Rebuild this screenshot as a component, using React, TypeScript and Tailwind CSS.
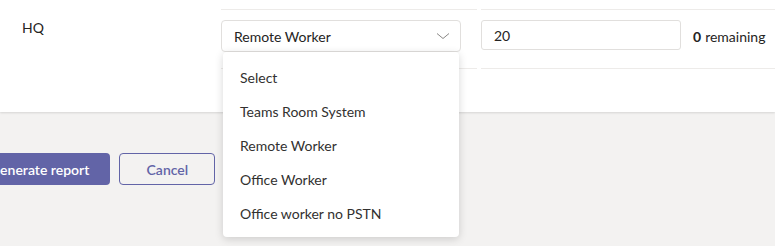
import React from "react";

const items = ["Select", "Teams Room System", "Remote Worker", "Office Worker", "Office worker no PSTN"];

export default function App() {
  return (
    <div
      className="relative w-[775px] h-[246px] overflow-hidden bg-[#f3f2f1] text-[#252423]"
      style={{ fontFamily: '"Segoe UI", Lato, "Liberation Sans", sans-serif' }}
    >
      <div className="bg-white h-[112px] shadow-[0_1px_2px_rgba(0,0,0,0.12)]">
        <div className="grid grid-cols-[221px_256px_4px_1fr]">
          <div className="h-[10px]" />
          <div className="h-[10px] border-b border-[#edebe9]" />
          <div />
          <div className="h-[10px] border-b border-[#edebe9]" />

          <div className="h-[59px] pl-[22px] pt-[8px] text-[14px] leading-[20px]">HQ</div>
          <div className="h-[59px] border-b border-[#edebe9] pt-[10px] pr-[16px]">
            <div className="h-[32px] w-[240px] border border-[#e1dfdd] rounded-[4px] flex items-center justify-between pl-[12px] pr-[10px] text-[14px]">
              <span>Remote Worker</span>
              <svg width="14" height="8" viewBox="0 0 14 8" fill="none">
                <path d="M1 1.5 L7 6.5 L13 1.5" stroke="#8a8886" strokeWidth="1" />
              </svg>
            </div>
          </div>
          <div />
          <div className="h-[59px] border-b border-[#edebe9] pt-[10px] flex items-start">
            <div className="h-[30px] w-[200px] border border-[#e1dfdd] rounded-[3px] flex items-center pl-[12px] text-[14px]">
              20
            </div>
            <div className="h-[30px] flex items-end ml-[12px] text-[14px] leading-[20px] pb-[3px]">
              <span className="font-bold mr-[4px]">0</span>
              <span>remaining</span>
            </div>
          </div>
        </div>
      </div>

      <div className="flex gap-[9px] mt-[41px] -ml-[36px]">
        <button className="h-[32px] pl-[26px] pr-[21px] rounded-[4px] bg-[#6264a7] text-white text-[14px] font-semibold">
          Generate report
        </button>
        <button className="h-[32px] w-[96px] rounded-[4px] border border-[#6264a7] text-[#6264a7] text-[14px] font-semibold">
          Cancel
        </button>
      </div>

      <div className="absolute left-[223px] top-[52px] w-[236px] h-[185px] bg-white rounded-[4px] shadow-[0_2px_8px_rgba(0,0,0,0.16)] py-[8px]">
        {items.map((t) => (
          <div key={t} className="h-[34px] flex items-center pl-[17px] text-[14px] text-[#323130]">
            {t}
          </div>
        ))}
      </div>
    </div>
  );
}
